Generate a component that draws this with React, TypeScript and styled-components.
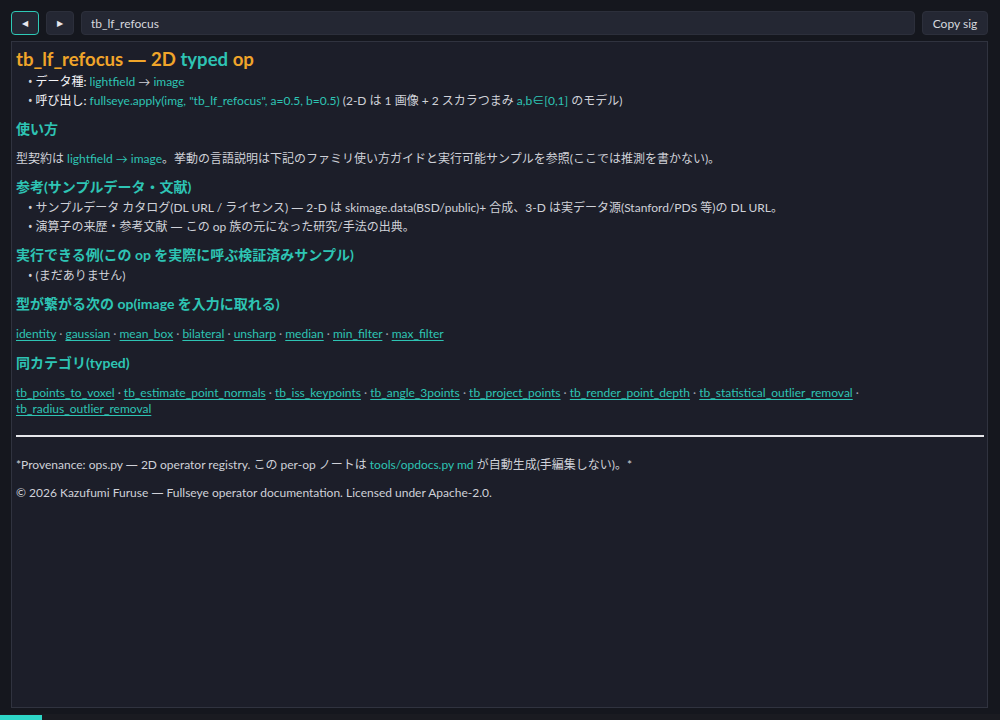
import React from "react";
import styled, { createGlobalStyle } from "styled-components";

const FONT = `Lato, "Noto Sans CJK JP", sans-serif`;

const Global = createGlobalStyle`
  html, body { margin: 0; padding: 0; background: #15171e; }
  body { font-family: ${FONT}; color: #cfd1d8; }
  * { box-sizing: border-box; }
`;

const Page = styled.div`
  height: 720px;
  display: flex;
  flex-direction: column;
  overflow: hidden;
`;

const Toolbar = styled.div`
  display: flex;
  align-items: center;
  gap: 7px;
  padding: 11px 12px 6px 11px;
`;

const NavButton = styled.button<{ $focused?: boolean }>`
  width: 28px;
  height: 24px;
  border-radius: 4px;
  border: 1px solid ${(p) => (p.$focused ? "#2ec9b7" : "#2c2f3b")};
  background: #242733;
  color: #e8e8ee;
  font-size: 8px;
  display: flex;
  align-items: center;
  justify-content: center;
  padding: 0;
`;

const Search = styled.input`
  flex: 1;
  min-width: 0;
  height: 24px;
  border-radius: 4px;
  border: 1px solid #2c2f3b;
  background: #242733;
  color: #d6d8de;
  font-family: ${FONT};
  font-size: 12px;
  padding: 0 9px;
  outline: none;
`;

const CopyButton = styled.button`
  height: 24px;
  width: 66px;
  padding: 0;
  border-radius: 4px;
  border: 1px solid #2c2f3b;
  background: #242733;
  color: #d6d8de;
  font-family: ${FONT};
  font-size: 12px;
`;

const Panel = styled.main`
  flex: 1;
  margin: 0 12px 0 11px;
  background: #1c1e29;
  border: 1px solid #30333f;
  padding: 2px 3px 0 4px;
  font-size: 12px;
  line-height: 19px;
`;

const Title = styled.h1`
  margin: 3px 0 1px;
  font-size: 18.6px;
  line-height: 24px;
  font-weight: 700;
  color: #f0a52a;
`;

const Teal = styled.span`
  color: #2ec4b4;
`;

const Dash = styled.span`
  font-family: "Noto Sans", sans-serif;
`;

const Heading = styled.h2`
  margin: 9px 0 2px;
  font-size: 14px;
  line-height: 19px;
  font-weight: 700;
  color: #2ec4b4;
`;

const List = styled.ul`
  margin: 0;
  padding: 0 0 0 12px;
  list-style: none;
`;

const Item = styled.li`
  &::before {
    content: "•";
    font-family: "Noto Sans", sans-serif;
    margin-right: 3px;
    color: #cfd1d8;
  }
`;

const Label = styled.span`
  color: #f4f4f7;
`;

const Para = styled.p`
  margin: 11px 0 9px;
`;

const LinkRow = styled.p`
  margin: 13px 0 11px;
  line-height: 16px;
`;

const Link = styled.a`
  color: #2ec4b4;
  text-decoration: underline;
  text-underline-offset: 2px;
`;

const Sep = styled.span`
  color: #9a9ca6;
`;

const Rule = styled.hr`
  border: 0;
  border-top: 2px solid #e6e6ea;
  margin: 18px 0 18px;
`;

const FootNote = styled.p`
  margin: 0 0 9px;
`;

const Progress = styled.div`
  height: 6px;
  margin-top: 6px;
  background: #1a1b21;
  display: flex;
  align-items: flex-end;
`;

const ProgressFill = styled.div`
  width: 42px;
  height: 5px;
  background: #2ed6c8;
`;

const links1 = ["identity", "gaussian", "mean_box", "bilateral", "unsharp", "median", "min_filter", "max_filter"];
const links2 = [
  "tb_points_to_voxel",
  "tb_estimate_point_normals",
  "tb_iss_keypoints",
  "tb_angle_3points",
  "tb_project_points",
  "tb_render_point_depth",
  "tb_statistical_outlier_removal",
  "tb_radius_outlier_removal",
];

function Links({ items, breakAfter }: { items: string[]; breakAfter?: number }) {
  return (
    <LinkRow>
      {items.map((n, i) => (
        <React.Fragment key={n}>
          <Link href="#">{n}</Link>
          {i < items.length - 1 && <Sep> · </Sep>}
          {breakAfter === i && <br />}
        </React.Fragment>
      ))}
    </LinkRow>
  );
}

export default function App() {
  return (
    <>
      <Global />
      <Page>
        <Toolbar>
          <NavButton $focused>◀</NavButton>
          <NavButton>▶</NavButton>
          <Search defaultValue="tb_lf_refocus" />
          <CopyButton>Copy sig</CopyButton>
        </Toolbar>
        <Panel>
          <Title>
            tb_lf_refocus <Dash>—</Dash> 2D <Teal>typed</Teal> op
          </Title>
          <List>
            <Item>
              <Label>データ種:</Label> <Teal>lightfield</Teal> → <Teal>image</Teal>
            </Item>
            <Item>
              <Label>呼び出し:</Label> <Teal>fullseye.apply(img, "tb_lf_refocus", a=0.5, b=0.5)</Teal> (2-D は 1 画像 + 2 スカラつまみ{" "}
              <Teal>a,b∈[0,1]</Teal> のモデル)
            </Item>
          </List>
          <Heading>使い方</Heading>
          <Para>
            型契約は <Teal>lightfield → image</Teal>。挙動の言語説明は下記のファミリ使い方ガイドと実行可能サンプルを参照(ここでは推測を書かない)。
          </Para>
          <Heading>参考(サンプルデータ・文献)</Heading>
          <List>
            <Item>
              サンプルデータ カタログ(DL URL / ライセンス) <Dash>—</Dash> 2-D は skimage.data(BSD/public)+ 合成、3-D は実データ源(Stanford/PDS 等)の DL URL。
            </Item>
            <Item>
              演算子の来歴・参考文献 <Dash>—</Dash> この op 族の元になった研究/手法の出典。
            </Item>
          </List>
          <Heading>実行できる例(この op を実際に呼ぶ検証済みサンプル)</Heading>
          <List>
            <Item>(まだありません)</Item>
          </List>
          <Heading>型が繋がる次の op(image を入力に取れる)</Heading>
          <Links items={links1} />
          <Heading>同カテゴリ(typed)</Heading>
          <Links items={links2} breakAfter={6} />
          <Rule />
          <FootNote>
            *Provenance: ops.py <Dash>—</Dash> 2D operator registry. この per-op ノートは <Teal>tools/opdocs.py md</Teal> が自動生成(手編集しない)。*
          </FootNote>
          <FootNote>
            © 2026 Kazufumi Furuse <Dash>—</Dash> Fullseye operator documentation. Licensed under Apache-2.0.
          </FootNote>
        </Panel>
        <Progress>
          <ProgressFill />
        </Progress>
      </Page>
    </>
  );
}
